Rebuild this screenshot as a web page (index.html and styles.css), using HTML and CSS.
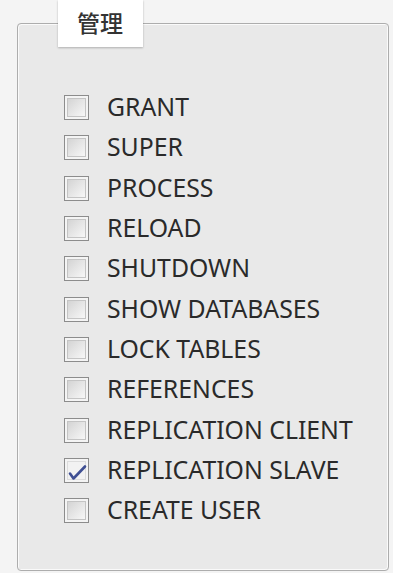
FILE: index.html
```html
<!DOCTYPE html>
<html lang="zh">
<head>
    <meta charset="UTF-8">
    <meta name="viewport" content="width=device-width, initial-scale=1.0">
    <title>管理</title>
    <link rel="stylesheet" href="styles.css">
</head>
<body>
    <fieldset class="group">
        <legend class="tab">管理</legend>
        <ul class="privs">
            <li><span class="box"></span>GRANT</li>
            <li><span class="box"></span>SUPER</li>
            <li><span class="box"></span>PROCESS</li>
            <li><span class="box"></span>RELOAD</li>
            <li><span class="box"></span>SHUTDOWN</li>
            <li><span class="box"></span>SHOW DATABASES</li>
            <li><span class="box"></span>LOCK TABLES</li>
            <li><span class="box"></span>REFERENCES</li>
            <li><span class="box"></span>REPLICATION CLIENT</li>
            <li>
                <span class="box checked">
                    <svg viewBox="0 0 25 25" width="25" height="25">
                        <path d="M6 15.5 L9.5 20.5 L21 8.5" fill="none" stroke="#3f4f93" stroke-width="2.6" stroke-linecap="round" stroke-linejoin="round"/>
                    </svg>
                </span>REPLICATION SLAVE
            </li>
            <li><span class="box"></span>CREATE USER</li>
        </ul>
    </fieldset>
</body>
</html>
```

FILE: styles.css
```css
html, body {
    height: 100%;
}

body {
    margin: 0;
    background-color: #f4f4f4;
    font-family: 'Noto Sans', 'Noto Sans CJK SC', sans-serif;
    color: #2a2a2a;
    box-sizing: border-box;
    padding: 0 4px 2px 17px;
}

.group {
    box-sizing: border-box;
    height: 100%;
    margin: 0;
    padding: 0 0 0 46px;
    border: 1px solid #adadad;
    border-radius: 4px;
    background-color: #e9e9e9;
    box-shadow: inset 1px 1px 0 #fafafa, inset -1px -1px 0 #fafafa;
}

.tab {
    box-sizing: border-box;
    height: 47px;
    width: 85px;
    margin-left: -6px;
    padding: 0 0 0 19px;
    background-color: #fff;
    box-shadow: 0 1px 2px rgba(0, 0, 0, 0.25);
    font-size: 23px;
    font-weight: 500;
    line-height: 47px;
    color: #333;
}

.privs {
    list-style: none;
    margin: 0;
    padding: 39px 0 0 0;
}

.privs li {
    display: flex;
    align-items: center;
    height: 40.3px;
    font-size: 24.8px;
    white-space: nowrap;
}

.box {
    position: relative;
    box-sizing: border-box;
    flex: none;
    width: 25px;
    height: 25px;
    margin: 3px 18px 0 0;
    border: 1px solid #8c8c8c;
    background-color: #f4f4f4;
}

.box::before {
    content: '';
    position: absolute;
    inset: 2px;
    border: 1px solid #c4c4c4;
    background: linear-gradient(135deg, #d4d4d4, #f7f7f7);
}

.box svg {
    position: absolute;
    left: -1px;
    top: -1px;
}

.checked::before {
    background: #f2f2f2;
    border-color: #dcdcdc;
}
```
